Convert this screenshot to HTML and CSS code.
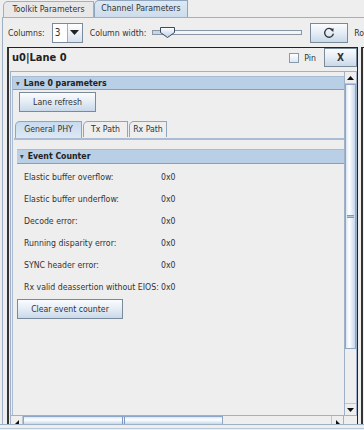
FILE: index.html
```html
<!DOCTYPE html>
<html lang="en">
<head>
    <meta charset="UTF-8">
    <title>Channel Parameters</title>
    <link rel="stylesheet" href="styles.css">
</head>
<body>
    <div class="frame">
        <div class="tabbar">
            <div class="tab">Toolkit Parameters</div>
            <div class="tab tab-on">Channel Parameters</div>
        </div>

        <div class="tabpane">
            <div class="toolbar">
                <span class="lbl">Columns:</span>
                <div class="combo">
                    <span class="combo-val">3</span>
                    <span class="combo-btn">
                        <svg width="9" height="5" viewBox="0 0 9 5"><path d="M0 0h9L4.5 5z" fill="#222"/></svg>
                    </span>
                </div>
                <span class="lbl lbl-width">Column width:</span>
                <div class="slider">
                    <div class="track"><div class="track-fill"></div></div>
                    <svg class="thumb" width="15" height="11" viewBox="0 0 15 11">
                        <defs>
                            <linearGradient id="tg" x1="0" y1="0" x2="0" y2="1">
                                <stop offset="0" stop-color="#ffffff"/>
                                <stop offset="1" stop-color="#b8cfe5"/>
                            </linearGradient>
                        </defs>
                        <path d="M0.5 0.5h14v5l-7 5l-7-5z" fill="url(#tg)" stroke="#3c4a5a"/>
                    </svg>
                </div>
                <button class="btn refresh">
                    <svg width="12" height="12" viewBox="0 0 12 12">
                        <path d="M9.6 3.2A4.4 4.4 0 1 0 10.4 6.6" fill="none" stroke="#333" stroke-width="1.3"/>
                        <path d="M7.2 2.6L10.6 1.2L10.3 4.9z" fill="#333"/>
                    </svg>
                </button>
                <span class="lbl lbl-cut">Ro</span>
            </div>

            <div class="panels">
                <div class="panel">
                    <div class="panel-head">
                        <span class="panel-title">u0|Lane 0</span>
                        <label class="pin"><span class="chk"></span>Pin</label>
                        <button class="btn close">X</button>
                    </div>

                    <div class="scroll">
                        <div class="scroll-main">
                            <div class="viewport">
                                <div class="section">
                                    <div class="section-head"><span class="caret">&#9662;</span>Lane 0 parameters</div>
                                    <div class="section-body">
                                        <button class="btn lane-refresh">Lane refresh</button>

                                        <div class="subtabs">
                                            <div class="subtab subtab-on">General PHY</div>
                                            <div class="subtab subtab-tx">Tx Path</div>
                                            <div class="subtab subtab-rx">Rx Path</div>
                                        </div>
                                        <div class="subpane">
                                            <div class="section-head counter-head"><span class="caret">&#9662;</span>Event Counter</div>
                                            <div class="rows">
                                                <div class="row"><span class="key">Elastic buffer overflow:</span><span class="val">0x0</span></div>
                                                <div class="row"><span class="key">Elastic buffer underflow:</span><span class="val">0x0</span></div>
                                                <div class="row"><span class="key">Decode error:</span><span class="val">0x0</span></div>
                                                <div class="row"><span class="key">Running disparity error:</span><span class="val">0x0</span></div>
                                                <div class="row"><span class="key">SYNC header error:</span><span class="val">0x0</span></div>
                                                <div class="row"><span class="key">Rx valid deassertion without EIOS:</span><span class="val">0x0</span></div>
                                            </div>
                                            <button class="btn clear">Clear event counter</button>
                                        </div>
                                    </div>
                                </div>
                            </div>

                            <div class="vbar">
                                <div class="arrow">
                                    <svg width="7" height="4" viewBox="0 0 7 4"><path d="M0 4h7L3.5 0z" fill="#111"/></svg>
                                </div>
                                <div class="vthumb"><span class="vgrip"></span></div>
                                <div class="vtrack"></div>
                                <div class="arrow">
                                    <svg width="7" height="4" viewBox="0 0 7 4"><path d="M0 0h7L3.5 4z" fill="#111"/></svg>
                                </div>
                            </div>
                        </div>

                        <div class="hbar">
                            <div class="harrow">
                                <svg width="4" height="4" viewBox="0 0 4 4"><path d="M4 0v4H0z" fill="#111"/></svg>
                            </div>
                            <div class="hthumb"><span class="hgrip"></span></div>
                            <div class="htrack"></div>
                            <div class="harrow harrow-r">
                                <svg width="4" height="4" viewBox="0 0 4 4"><path d="M0 0v4h4z" fill="#111"/></svg>
                            </div>
                            <div class="corner"></div>
                        </div>
                    </div>
                </div>
                <div class="panel panel-next"></div>
            </div>
        </div>
        <div class="bottom"></div>
    </div>
</body>
</html>
```

FILE: styles.css
```css
* {
    box-sizing: border-box;
}
body {
    margin: 0;
    width: 364px;
    height: 430px;
    overflow: hidden;
    background-color: #eeeeee;
    font-family: "DejaVu Sans Condensed", "DejaVu Sans", "Liberation Sans", sans-serif;
    font-stretch: condensed;
    font-size: 8.7px;
    color: #333333;
    white-space: nowrap;
}
.frame {
    display: flex;
    flex-direction: column;
    height: 430px;
}

/* top tabs */
.tabbar {
    display: flex;
    align-items: flex-end;
    height: 17px;
    padding-left: 3px;
}
.tab {
    height: 16px;
    width: 91px;
    border: 1px solid #9eb0c4;
    border-bottom: none;
    border-top-left-radius: 5px;
    background-color: #e8e8e8;
    line-height: 15px;
    text-align: center;
    color: #333333;
}
.tab-on {
    width: 94px;
    height: 17px;
    border-color: #8fa5be;
    background: linear-gradient(#dde8f3, #cddcec);
}
.tabpane {
    flex: 1;
    display: flex;
    flex-direction: column;
    margin-left: 2px;
    border-left: 1px solid #9eb0c4;
    border-top: 1px solid #9eb0c4;
    min-height: 0;
}

/* toolbar */
.toolbar {
    display: flex;
    align-items: center;
    height: 29px;
    padding-left: 5px;
}
.lbl {
    color: #333333;
}
.combo {
    display: flex;
    margin-left: 7px;
    height: 20px;
    width: 32px;
    border: 1px solid #7a8a99;
    background-color: #ffffff;
}
.combo-val {
    width: 15px;
    padding-left: 2px;
    line-height: 18px;
    font-size: 10px;
    border-right: 1px solid #9eb0c4;
}
.combo-btn {
    flex: 1;
    display: flex;
    align-items: center;
    justify-content: center;
    background: linear-gradient(#ffffff, #d6e2ef);
}
.lbl-width {
    margin-left: 7px;
}
.slider {
    position: relative;
    display: flex;
    align-items: center;
    width: 152px;
    height: 14px;
    margin-left: 6px;
}
.track {
    width: 150px;
    height: 5px;
    border: 1px solid #8896a5;
    background-color: #f4f4f4;
}
.track-fill {
    width: 9px;
    height: 100%;
    background-color: #c4d6ea;
}
.thumb {
    position: absolute;
    left: 8px;
    top: 1px;
}
.btn {
    font-family: inherit;
    font-stretch: condensed;
    font-size: 8.7px;
    color: #333333;
    border: 1px solid #7a8a99;
    border-radius: 0;
    background: linear-gradient(#fbfcfe, #e4ecf5 50%, #c9d9ea);
    padding: 0;
    cursor: pointer;
}
.refresh {
    width: 39px;
    height: 20px;
    margin-left: 8px;
    display: flex;
    align-items: center;
    justify-content: center;
}
.lbl-cut {
    margin-left: 6px;
}

/* panels */
.panels {
    flex: 1;
    display: flex;
    gap: 3px;
    padding-left: 4px;
    min-height: 0;
}
.panel {
    width: 351px;
    flex-shrink: 0;
    display: flex;
    flex-direction: column;
    border: 1px solid #222222;
    border-left: 2px solid #333333;
    border-bottom: none;
}
.panel-next {
    width: 10px;
    border-right: none;
}
.panel-head {
    display: flex;
    align-items: center;
    height: 19px;
    flex-shrink: 0;
    padding-left: 3px;
}
.panel-title {
    flex: 1;
    font-weight: bold;
    font-size: 11px;
    color: #222222;
}
.pin {
    display: flex;
    align-items: center;
    gap: 5px;
    margin-right: 8px;
}
.chk {
    width: 10px;
    height: 10px;
    border: 1px solid #8a9aaa;
    background: linear-gradient(#ffffff, #dde8f3);
}
.close {
    width: 33px;
    height: 19px;
    font-size: 10px;
    font-weight: bold;
    align-self: flex-start;
}

/* scroll pane */
.scroll {
    flex: 1;
    display: flex;
    flex-direction: column;
    margin-top: 4px;
    margin-left: 1px;
    border: 1px solid #9fb1c6;
    border-bottom: none;
    border-right: none;
    min-height: 0;
}
.scroll-main {
    flex: 1;
    display: flex;
    min-height: 0;
}
.viewport {
    flex: 1;
    overflow: hidden;
    padding: 4px 0 0 1px;
}
.section {
    border-left: 1px solid #a9bcd4;
    height: 100%;
}
.section-head {
    height: 14px;
    line-height: 13px;
    background-color: #b8cfe5;
    border-top: 1px solid #a9bcd4;
    border-bottom: 1px solid #9a9a9a;
    font-weight: bold;
    color: #222222;
    padding-left: 3px;
}
.caret {
    display: inline-block;
    font-size: 8px;
    margin-right: 4px;
    color: #444444;
}
.section-body {
    padding: 2px 0 0 1px;
}
.lane-refresh {
    display: block;
    width: 77px;
    height: 20px;
    margin-left: 5px;
}

/* inner tabs */
.subtabs {
    display: flex;
    margin-top: 9px;
    padding-left: 1px;
}
.subtab {
    height: 16px;
    line-height: 15px;
    text-align: center;
    border: 1px solid #8fa5be;
    border-bottom: none;
    border-top-left-radius: 5px;
    background-color: #eeeeee;
    margin-right: 1px;
}
.subtab-on {
    width: 67px;
    height: 17px;
    background: linear-gradient(#c8dbee, #dde8f3);
}
.subtab-tx {
    width: 45px;
}
.subtab-rx {
    width: 38px;
}
.subpane {
    border-top: 2px solid #a9bcd4;
    padding: 9px 0 0 3px;
}
.counter-head {
    height: 15px;
    line-height: 13px;
}
.rows {
    padding: 2px 0 0 7px;
}
.row {
    display: flex;
    height: 22px;
    line-height: 22px;
}
.key {
    min-width: 135px;
    margin-right: 2px;
}
.val {
    color: #333333;
}
.clear {
    display: block;
    width: 106px;
    height: 20px;
    margin-top: 1px;
}

/* scrollbars */
.vbar {
    width: 13px;
    display: flex;
    flex-direction: column;
    border-left: 1px solid #9fb1c6;
    border-right: 1px solid #9fb1c6;
}
.arrow {
    height: 12px;
    display: flex;
    align-items: center;
    justify-content: center;
    border-bottom: 1px solid #b9c6d4;
    background-color: #eeeeee;
}
.arrow:last-child {
    border-top: 1px solid #b9c6d4;
    border-bottom: none;
}
.vthumb {
    height: 265px;
    display: flex;
    align-items: center;
    justify-content: center;
    border: 1px solid #8da6c9;
    background: linear-gradient(to right, #dbe6f2, #ffffff 35%, #c6d8ec);
}
.vgrip {
    width: 7px;
    height: 3px;
    border-top: 1px solid #7d98c2;
    border-bottom: 1px solid #7d98c2;
    background-color: #b3c7e1;
}
.vtrack {
    flex: 1;
    background-color: #eeeeee;
}
.hbar {
    height: 9px;
    flex-shrink: 0;
    display: flex;
    border-top: 1px solid #9fb1c6;
}
.harrow {
    width: 12px;
    display: flex;
    align-items: flex-end;
    justify-content: center;
    border-right: 1px solid #b9c6d4;
}
.harrow-r {
    width: 13px;
    border-left: 1px solid #b9c6d4;
    border-right: 1px solid #9fb1c6;
}
.hthumb {
    width: 200px;
    display: flex;
    justify-content: center;
    border: 1px solid #8da6c9;
    border-bottom: none;
    background: linear-gradient(#dbe6f2, #ffffff 40%, #c6d8ec);
}
.hgrip {
    width: 3px;
    border-left: 1px solid #7d98c2;
    border-right: 1px solid #7d98c2;
}
.htrack {
    flex: 1;
}
.corner {
    width: 13px;
}
.bottom {
    height: 5px;
    flex-shrink: 0;
    border-top: 1px solid #9fb1c6;
    border-bottom: 1px solid #b9c6d4;
    margin-bottom: 1px;
}
```
